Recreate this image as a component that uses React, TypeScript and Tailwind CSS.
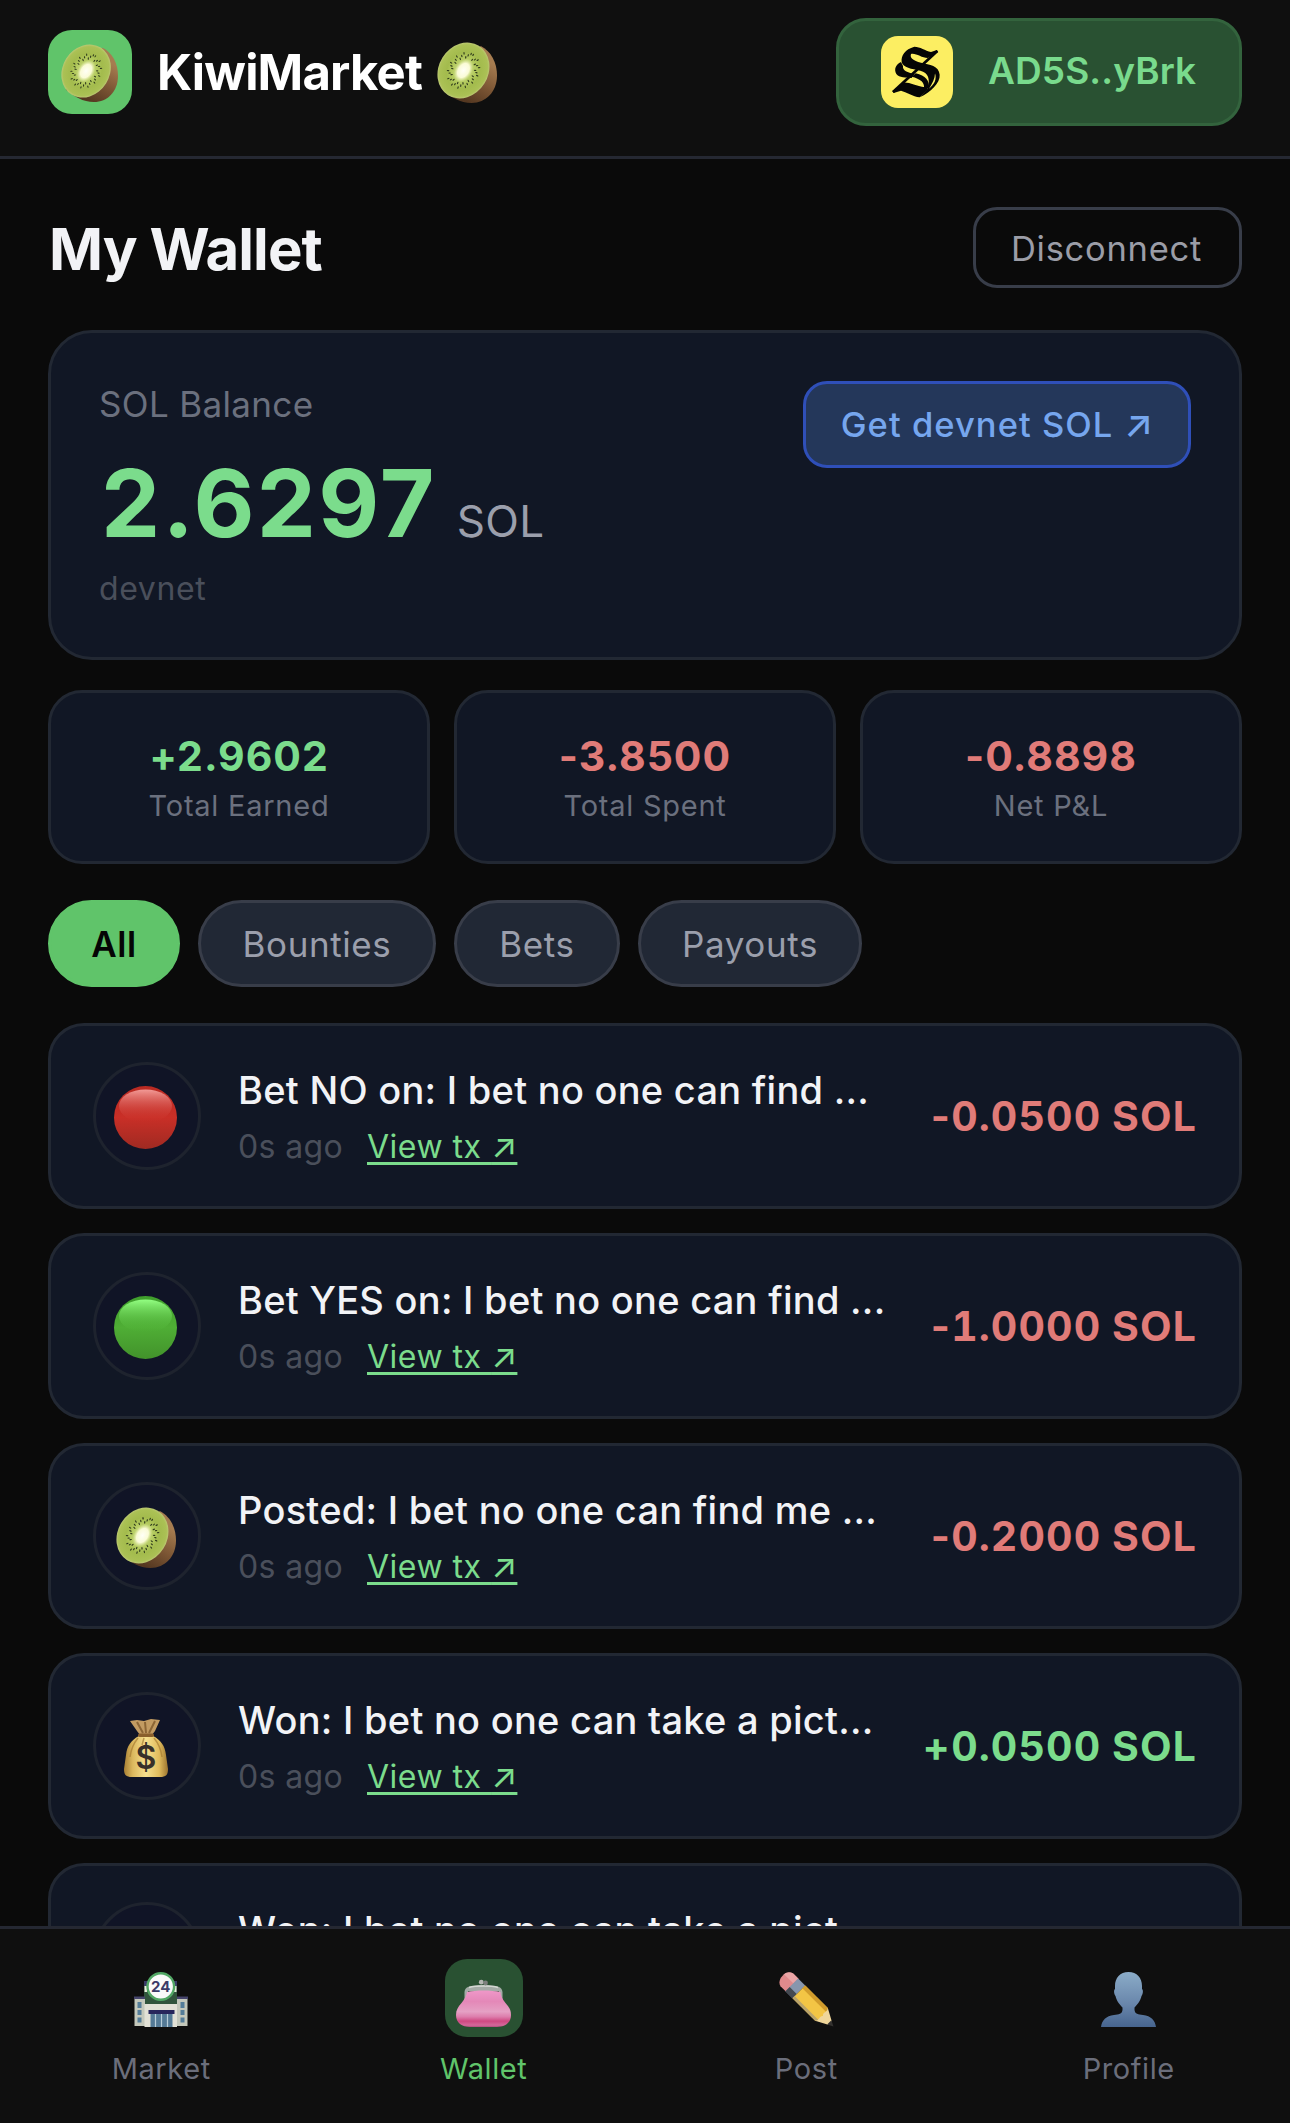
type IconProps = { size?: number }

const SEEDS = Array.from({ length: 40 }, (_, i) => {
  const a = (i / 40) * Math.PI * 2
  const r = i % 3 === 0 ? 1.06 : i % 3 === 1 ? 0.8 : 0.93
  return { x: Math.cos(a) * 17 * r, y: Math.sin(a) * 13.5 * r, a: (a * 180) / Math.PI }
})

function Kiwi({ size = 61 }: IconProps) {
  return (
    <svg width={size} height={size} viewBox="0 0 60 60">
      <defs>
        <linearGradient id="kiwiSkin" x1="0.9" y1="0.3" x2="0.5" y2="1">
          <stop offset="0" stopColor="#a67c50" />
          <stop offset="0.55" stopColor="#7a5433" />
          <stop offset="1" stopColor="#553821" />
        </linearGradient>
        <radialGradient id="kiwiFlesh">
          <stop offset="0" stopColor="#d8e596" />
          <stop offset="0.45" stopColor="#b3ca5e" />
          <stop offset="0.65" stopColor="#a3bb4d" />
          <stop offset="0.92" stopColor="#abc155" />
          <stop offset="1" stopColor="#bcc873" />
        </radialGradient>
        <radialGradient id="kiwiCore">
          <stop offset="0" stopColor="#fffff6" />
          <stop offset="0.6" stopColor="#fafbd6" />
          <stop offset="1" stopColor="#dbe79a" stopOpacity="0" />
        </radialGradient>
      </defs>
      <path d="M44 4C54 9 60 20 60 33C60 49 49 60 35 60C24 60 14 54 6 47Z" fill="url(#kiwiSkin)" />
      <g transform="translate(27 28) rotate(-58)">
        <ellipse rx="28.6" ry="24.3" fill="url(#kiwiFlesh)" />
        {SEEDS.map((s, i) => (
          <ellipse key={i} cx={s.x} cy={s.y} rx="1.3" ry="0.6" fill="#2f3a1c" transform={`rotate(${s.a} ${s.x} ${s.y})`} />
        ))}
        <ellipse rx="12.5" ry="8.5" fill="url(#kiwiCore)" />
      </g>
    </svg>
  )
}

function RedBall() {
  return (
    <svg width="63" height="63" viewBox="0 0 63 63">
      <defs>
        <linearGradient id="redBase" x1="0" y1="0" x2="0" y2="1">
          <stop offset="0" stopColor="#b92a22" />
          <stop offset="0.5" stopColor="#c92f27" />
          <stop offset="1" stopColor="#a02a22" />
        </linearGradient>
        <linearGradient id="redShine" x1="0" y1="0" x2="0" y2="1">
          <stop offset="0" stopColor="#f29a96" />
          <stop offset="1" stopColor="#cc3129" stopOpacity="0" />
        </linearGradient>
      </defs>
      <circle cx="31.5" cy="31.5" r="31.5" fill="url(#redBase)" />
      <ellipse cx="31.5" cy="20" rx="26.5" ry="16.5" fill="url(#redShine)" />
    </svg>
  )
}

function GreenBall() {
  return (
    <svg width="63" height="63" viewBox="0 0 63 63">
      <defs>
        <linearGradient id="greenBase" x1="0" y1="0" x2="0" y2="1">
          <stop offset="0" stopColor="#3f9e2c" />
          <stop offset="0.5" stopColor="#4fae35" />
          <stop offset="1" stopColor="#42922b" />
        </linearGradient>
        <linearGradient id="greenShine" x1="0" y1="0" x2="0" y2="1">
          <stop offset="0" stopColor="#93ff82" />
          <stop offset="1" stopColor="#54b83a" stopOpacity="0" />
        </linearGradient>
      </defs>
      <circle cx="31.5" cy="31.5" r="31.5" fill="url(#greenBase)" />
      <ellipse cx="31.5" cy="20" rx="26.5" ry="16.5" fill="url(#greenShine)" />
    </svg>
  )
}

function MoneyBag() {
  return (
    <svg width="44" height="58" viewBox="0 0 44 58">
      <defs>
        <linearGradient id="bag" x1="0" y1="0" x2="1" y2="0">
          <stop offset="0" stopColor="#a87f34" />
          <stop offset="0.2" stopColor="#dcb85e" />
          <stop offset="0.5" stopColor="#f6e08f" />
          <stop offset="0.8" stopColor="#e0bb5c" />
          <stop offset="1" stopColor="#9c742f" />
        </linearGradient>
      </defs>
      <path d="M6 2L13 1L20 2L27 0L36 1L31 12L28 16H16L13 12Z" fill="#c29b62" />
      <path d="M13 3L19 14M21 3L22 14M31 2L25 14" stroke="#8b6535" strokeWidth="2" fill="none" />
      <path d="M15 17H29C37 21 41 27 42 36L44 50C44 56 42 58 36 58H8C2 58 0 56 0 50L2 36C3 27 7 21 15 17Z" fill="url(#bag)" />
      <path d="M14 19C9 25 7 30 6 38M30 19C35 25 37 30 38 38M20 19L18 26" stroke="#a87d33" strokeWidth="1.5" fill="none" opacity="0.7" />
      <rect x="14" y="14.5" width="16" height="3.5" rx="1.7" fill="#8a5f2c" />
      <text x="22" y="49.5" textAnchor="middle" fontSize="32" fontWeight="600" fontFamily="Inter, sans-serif" fill="#383029">$</text>
    </svg>
  )
}

function MarketIcon() {
  return (
    <svg width="54" height="55" viewBox="0 0 54 55">
      <path d="M10 9H43V32H10Z" fill="#31543c" />
      <path d="M10 9H14V14H10ZM39 9H43V14H39Z" fill="#3a3a66" />
      <path d="M10.5 14H13V20H10.5ZM40 14H42.5V20H40Z" fill="#e8eddc" />
      <path d="M0.5 27H11V54H0.5ZM43 27H53.5V54H43Z" fill="#c4c8bb" />
      <path d="M0 24.5H11V27H0ZM43 24.5H54V27H43Z" fill="#45446b" />
      <path d="M3.5 30H7.5V36H3.5ZM3.5 38H7.5V43H3.5ZM3.5 45.5H7.5V50.5H3.5ZM46.5 30H50.5V36H46.5ZM46.5 38H50.5V43H46.5ZM46.5 45.5H50.5V50.5H46.5Z" fill="#547d99" />
      <path d="M10.5 32H43V55H10.5Z" fill="#e2e1d6" />
      <path d="M14.5 38H40.5V42H14.5Z" fill="#27265c" />
      <path d="M16.5 42H38.5V55H16.5Z" fill="#547a96" />
      <path d="M21.5 42V55M27.5 42V55M33.5 42V55" stroke="#b6ccd8" strokeWidth="1.2" />
      <circle cx="26.8" cy="14.5" r="13.3" fill="#fafafa" stroke="#52a765" strokeWidth="2.4" />
      <text x="26.8" y="19.8" textAnchor="middle" fontSize="15" fontWeight="700" fontFamily="Inter, sans-serif" fill="#3b3a68">24</text>
    </svg>
  )
}

function PurseIcon() {
  return (
    <svg width="55" height="48" viewBox="0 0 55 48">
      <defs>
        <linearGradient id="purse" x1="0" y1="0" x2="0" y2="1">
          <stop offset="0" stopColor="#ef97c8" />
          <stop offset="0.3" stopColor="#e488b8" />
          <stop offset="0.58" stopColor="#e5a0c4" />
          <stop offset="0.72" stopColor="#dd7dac" />
          <stop offset="0.84" stopColor="#cf4881" />
          <stop offset="0.95" stopColor="#d4689a" />
          <stop offset="1" stopColor="#b04d7c" />
        </linearGradient>
      </defs>
      <path d="M8.5 24V13C9 8 13 6 27.5 6S46 8 46.5 13V24H43V12H12V24Z" fill="#a3aba6" />
      <path d="M13 8.5C20 6.5 35 6.5 42 8.5" stroke="#d3d7d2" strokeWidth="1.5" fill="none" />
      <circle cx="25.3" cy="3.2" r="2.4" fill="#b4b7b3" />
      <circle cx="29.5" cy="4" r="2.4" fill="#7c807d" />
      <path
        d="M11 13C20 11 35 11 44.5 13C44.5 17 46.5 20 49.5 24C53 28 55 31 55 36C55 44 49 48 41 48H14C6 48 0 44 0 36C0 31 2 28 5.5 24C8.5 20 10.5 17 11 13Z"
        fill="url(#purse)"
      />
    </svg>
  )
}

function PencilIcon() {
  return (
    <svg width="56" height="55" viewBox="0 0 56 55">
      <g transform="translate(55.5 54.5) rotate(45)">
        <path d="M-58 -9H-66C-74 -7 -74 7 -66 9H-58Z" fill="#e08a8c" />
        <path d="M-59 -9H-66C-70 -8 -72 -5 -72 -2H-59Z" fill="#eba5a6" />
        <path d="M-59 -9H-49V9H-59Z" fill="#8796ad" />
        <path d="M-59 3H-49V9H-59Z" fill="#454a52" />
        <path d="M-49 -9H-17L-13 -5V5L-17 9H-49Z" fill="#f3c545" />
        <path d="M-49 -9H-17L-15 -5H-49Z" fill="#d19c2c" />
        <path d="M-49 6H-15L-17 9H-49Z" fill="#b9a36b" />
        <path d="M-17 -9L-5 -2.5V2.5L-17 9C-14 5 -18 3 -15 0C-18 -3 -14 -5 -17 -9Z" fill="#efd69a" />
        <path d="M-6 -3L0 0L-6 3Z" fill="#33312f" />
      </g>
    </svg>
  )
}

function PersonIcon() {
  return (
    <svg width="55" height="55" viewBox="0 0 55 55">
      <defs>
        <linearGradient id="person" x1="0" y1="0" x2="0" y2="1">
          <stop offset="0" stopColor="#8bacc8" />
          <stop offset="0.6" stopColor="#6885aa" />
          <stop offset="1" stopColor="#47658f" />
        </linearGradient>
      </defs>
      <path
        d="M27.5 0C36 0 41 6 41 14V17C42.5 18 42 22 40.5 24C39.5 29 36 33 33.5 35.5V38C34 42 37 42.5 42 43C50 44 54 48 55 55H0C1 48 5 44 13 43C18 42.5 21 42 21.5 38V35.5C19 33 15.5 29 14.5 24C13 22 12.5 18 14 17V14C14 6 19 0 27.5 0Z"
        fill="url(#person)"
      />
    </svg>
  )
}

function WalletLogo() {
  return (
    <svg className="rounded-[17px] bg-[#fcee62]" width="72" height="72" viewBox="0 0 216 216">
      <g fill="#050505">
        <path d="M100 32C72 40 60 58 62 78C66 96 92 98 118 104C142 110 148 128 140 158L116 184C150 168 178 140 176 116C174 88 146 86 120 80C96 74 86 66 90 54C104 50 122 66 140 66L171 48L168 42L150 48C132 44 118 32 100 32Z" />
        <path d="M60 78C44 86 38 100 46 114C54 126 76 124 92 126L100 114C80 110 64 104 66 90Z" />
        <path d="M34 166L66 140C86 138 104 150 132 154L142 158L116 184C96 182 76 168 60 164L38 171Z" />
        <path d="M92 122C118 128 134 140 128 160L144 156C146 136 134 118 104 112Z" />
      </g>
      <path d="M162 112C168 130 160 146 144 158C154 142 162 128 162 112Z" fill="#fcee62" />
      <path d="M36 168L169 45" stroke="#050505" strokeWidth="8" />
    </svg>
  )
}

function Header() {
  return (
    <header className="flex h-[159px] shrink-0 items-start justify-between border-b-[3px] border-[#252832] bg-[#0f0f0f] px-12 pt-[18px]">
      <div className="flex h-[108px] items-center">
        <div className="flex h-[84px] w-[84px] items-center justify-center rounded-3xl bg-[#60c46a] pr-[2px] pt-[2px]">
          <Kiwi size={58} />
        </div>
        <h1 className="ml-[25px] pt-px text-[49px] font-bold tracking-[-0.8px] text-white">KiwiMarket</h1>
        <div className="ml-[14px]">
          <Kiwi />
        </div>
      </div>
      <button className="flex h-[108px] w-[406px] items-center rounded-[30px] border-[3px] border-[#33633d] bg-[#295132] pl-[42px]">
        <WalletLogo />
        <span className="ml-[35px] pb-[3px] text-[37px] font-semibold tracking-[0.1px] text-[#79da8d]">AD5S..yBrk</span>
      </button>
    </header>
  )
}

function BalanceCard() {
  return (
    <section className="mt-[42px] flex h-[330px] items-start justify-between rounded-[44px] border-[3px] border-[#222833] bg-[#111725] p-12">
      <div>
        <p className="h-[47px] text-[35px] leading-[47px] tracking-[0.35px] text-[#6b707e]">SOL Balance</p>
        <p className="ml-[2px] mt-[11px] h-32 text-[94px] leading-[128px]">
          <span className="font-bold tracking-[2.3px] text-[#7bdc8c]">2.6297</span>
          <span className="ml-5 text-[44px] tracking-[0.3px] text-[#9b9fac]">SOL</span>
        </p>
        <p className="text-[32px] leading-[44px] tracking-[0.6px] text-[#4a4f5b]">devnet</p>
      </div>
      <button className="h-[87px] w-[388px] rounded-3xl border-[3px] border-[#2f4fb8] bg-[#24375a] pt-px text-[34.5px] font-medium tracking-[1.05px] text-[#76a6ee]">
        Get devnet SOL <span className="text-[38px] leading-none tracking-[0px]">↗</span>
      </button>
    </section>
  )
}

const stats = [
  { value: "+2.9602", label: "Total Earned", color: "text-[#7bdc8c]" },
  { value: "-3.8500", label: "Total Spent", color: "text-[#e07b78]" },
  { value: "-0.8898", label: "Net P&L", color: "text-[#e07b78]" },
]

const filters = [
  { label: "All", style: "w-[132px] border-[#60c46a] bg-[#60c46a] font-semibold text-[#050505]" },
  { label: "Bounties", style: "w-[238px] border-[#383d49] bg-[#212835] text-[#9b9fac]" },
  { label: "Bets", style: "w-[166px] border-[#383d49] bg-[#212835] text-[#9b9fac]" },
  { label: "Payouts", style: "w-[224px] border-[#383d49] bg-[#212835] text-[#9b9fac]" },
]

const transactions = [
  { icon: <RedBall />, title: "Bet NO on: I bet no one can find ...", sign: "-", amount: "0.0500" },
  { icon: <GreenBall />, title: "Bet YES on: I bet no one can find ...", sign: "-", amount: "1.0000" },
  { icon: <Kiwi />, title: "Posted: I bet no one can find me ...", sign: "-", amount: "0.2000" },
  { icon: <MoneyBag />, title: "Won: I bet no one can take a pict...", sign: "+", amount: "0.0500" },
  { icon: <MoneyBag />, title: "Won: I bet no one can take a pict...", sign: "+", amount: "0.0500" },
]

function TransactionRow({ icon, title, sign, amount }: (typeof transactions)[number]) {
  const amountColor = sign === "+" ? "text-[#7bdc8c]" : "text-[#e07b78]"
  return (
    <li className="flex h-[186px] shrink-0 items-center rounded-[36px] border-[3px] border-[#222833] bg-[#111725] px-[42px]">
      <div className="flex h-[108px] w-[108px] shrink-0 items-center justify-center rounded-full border-[3px] border-[#1e232e] bg-[#101426] pr-[3px] pt-[3px]">
        {icon}
      </div>
      <div className="ml-[37px] pt-[5px]">
        <p className="whitespace-nowrap text-[38px] font-medium leading-[54px] tracking-[0.27px] text-[#f2f3f6]">{title}</p>
        <div className="mt-[3px] flex text-[32px] leading-[54px]">
          <span className="w-[129px] tracking-[0.35px] text-[#4a4f5b]">0s ago</span>
          <a className="tracking-[0.5px] text-[#7bdc8c] underline decoration-[3px] underline-offset-[4px]">
            View tx <span className="text-[34px] leading-none tracking-[0px]">↗</span>
          </a>
        </div>
      </div>
      <span className={`ml-auto whitespace-nowrap pt-[2px] text-[41px] font-[650] tracking-[1.1px] ${amountColor}`}>
        {sign}
        <span className="tabular-nums">{amount}</span> SOL
      </span>
    </li>
  )
}

const tabs = [
  { label: "Market", icon: <MarketIcon /> },
  { label: "Wallet", icon: <PurseIcon />, active: true },
  { label: "Post", icon: <PencilIcon /> },
  { label: "Profile", icon: <PersonIcon /> },
]

function BottomNav() {
  return (
    <nav className="grid h-[197px] shrink-0 grid-cols-4 border-t-[3px] border-[#252832] bg-[#0f0f0f] pt-[30px]">
      {tabs.map((tab) => (
        <div key={tab.label} className="flex flex-col items-center">
          <div className={`flex h-[78px] w-[78px] items-end justify-center rounded-[22px] pb-[10px] ${tab.active ? "bg-[#295132]" : ""}`}>
            {tab.icon}
          </div>
          <span className={`mt-[9px] text-[29px] leading-[45px] tracking-[0.6px] ${tab.active ? "text-[#60c46a]" : "text-[#6b6e7b]"}`}>
            {tab.label}
          </span>
        </div>
      ))}
    </nav>
  )
}

export default function App() {
  return (
    <div className="flex h-[2123px] w-[1290px] flex-col overflow-hidden bg-[#0a0a0a] font-['Inter',sans-serif]">
      <Header />
      <main className="flex min-h-0 flex-1 flex-col overflow-hidden px-12 pt-12">
        <div className="flex h-[81px] shrink-0 items-center justify-between">
          <h2 className="ml-px pt-[3px] text-[58px] font-bold tracking-[-0.9px] text-[#f2f3f6]">My Wallet</h2>
          <button className="h-[81px] w-[269px] rounded-3xl border-[3px] border-[#383d49] pr-[2px] pt-[2px] text-[34.5px] tracking-[0.75px] text-[#9b9da7]">
            Disconnect
          </button>
        </div>
        <div className="shrink-0">
          <BalanceCard />
        </div>
        <div className="mt-[30px] grid shrink-0 grid-cols-3 gap-6">
          {stats.map((s) => (
            <div key={s.label} className="h-[174px] rounded-[34px] border-[3px] border-[#222833] bg-[#111725] pt-[33px] text-center">
              <p className={`text-[41px] font-bold leading-[60px] tracking-[1px] ${s.color}`}>{s.value}</p>
              <p className="text-[29px] leading-[39px] tracking-[0.75px] text-[#6b707e]">{s.label}</p>
            </div>
          ))}
        </div>
        <div className="mt-9 flex shrink-0 gap-[18px]">
          {filters.map((f) => (
            <button key={f.label} className={`h-[87px] rounded-full border-[3px] pt-px text-[35px] tracking-[0.6px] ${f.style}`}>
              {f.label}
            </button>
          ))}
        </div>
        <ul className="mt-9 flex flex-col gap-6">
          {transactions.map((tx, i) => (
            <TransactionRow key={i} {...tx} />
          ))}
        </ul>
      </main>
      <BottomNav />
    </div>
  )
}
